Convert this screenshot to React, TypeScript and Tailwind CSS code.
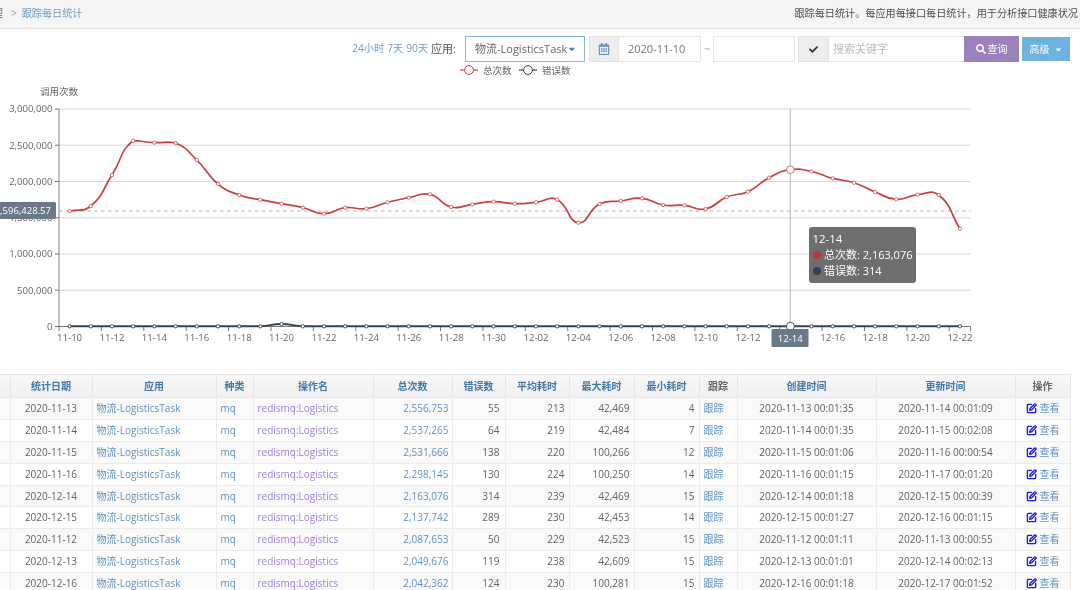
import React from "react";
import { SquarePen } from "lucide-react";
import { FaRegCalendarAlt, FaCaretDown, FaCheck, FaSearch } from "react-icons/fa";

const totalY = [211,206,175,140.7,142.6,143,160,184,195,199.7,203.7,207.7,213.7,207.7,208.7,202.3,197.7,194.3,207,204.3,201.7,203.7,202.3,199.7,222.7,204,201,198.3,205,205.3,209,197,191.7,177.7,169.7,171.5,178.4,182.7,192,199.3,194.7,195,228.7];
const errorY = totalY.map((_, i) => (i === 10 ? 324 : 326.3));
const band = (970.5 - 59) / 43;
const xAt = (i: number) => 59 + band * (i + 0.5);

function smooth(ys: number[]) {
  const lo = Math.min(...ys);
  const hi = Math.max(...ys);
  const pts = ys.map((y, i) => [xAt(i), y]);
  const ctrl = pts.map((p, i) => {
    const a = pts[Math.max(i - 1, 0)];
    const b = pts[Math.min(i + 1, pts.length - 1)];
    const d0 = Math.hypot(p[0] - a[0], p[1] - a[1]);
    const d1 = Math.hypot(p[0] - b[0], p[1] - b[1]);
    const sum = d0 + d1 || 1;
    const vx = (b[0] - a[0]) * 0.5;
    const vy = (b[1] - a[1]) * 0.5;
    const cl = (v: number) => Math.min(hi, Math.max(lo, v));
    return {
      inX: p[0] - (vx * d0) / sum,
      inY: cl(p[1] - (vy * d0) / sum),
      outX: p[0] + (vx * d1) / sum,
      outY: cl(p[1] + (vy * d1) / sum),
    };
  });
  let d = `M${pts[0][0]} ${pts[0][1]}`;
  for (let i = 0; i < pts.length - 1; i++) {
    d += ` C${ctrl[i].outX} ${ctrl[i].outY} ${ctrl[i + 1].inX} ${ctrl[i + 1].inY} ${pts[i + 1][0]} ${pts[i + 1][1]}`;
  }
  return d;
}

const dates: string[] = [];
for (let i = 0; i < 43; i++) {
  dates.push(i < 21 ? `11-${String(10 + i)}` : `12-${String(i - 20).padStart(2, "0")}`);
}

const yTicks = [
  ["3,000,000", 109],
  ["2,500,000", 145.2],
  ["2,000,000", 181.5],
  ["1,500,000", 217.8],
  ["1,000,000", 254],
  ["500,000", 290.2],
  ["0", 326.5],
] as const;

const rows = [
  ["2020-11-13", "2,556,753", "55", "213", "42,469", "4", "2020-11-13 00:01:35", "2020-11-14 00:01:09"],
  ["2020-11-14", "2,537,265", "64", "219", "42,484", "7", "2020-11-14 00:01:35", "2020-11-15 00:02:08"],
  ["2020-11-15", "2,531,666", "138", "220", "100,266", "12", "2020-11-15 00:01:06", "2020-11-16 00:00:54"],
  ["2020-11-16", "2,298,145", "130", "224", "100,250", "14", "2020-11-16 00:01:15", "2020-11-17 00:01:20"],
  ["2020-12-14", "2,163,076", "314", "239", "42,469", "15", "2020-12-14 00:01:18", "2020-12-15 00:00:39"],
  ["2020-12-15", "2,137,742", "289", "230", "42,453", "14", "2020-12-15 00:01:27", "2020-12-16 00:01:15"],
  ["2020-11-12", "2,087,653", "50", "229", "42,523", "15", "2020-11-12 00:01:11", "2020-11-13 00:00:55"],
  ["2020-12-13", "2,049,676", "119", "238", "42,609", "15", "2020-12-13 00:01:01", "2020-12-14 00:02:13"],
  ["2020-12-16", "2,042,362", "124", "230", "100,281", "15", "2020-12-16 00:01:18", "2020-12-17 00:01:52"],
];

const heads: [string, boolean][] = [
  ["", false],
  ["统计日期", true],
  ["应用", true],
  ["种类", true],
  ["操作名", true],
  ["总次数", true],
  ["错误数", true],
  ["平均耗时", true],
  ["最大耗时", true],
  ["最小耗时", true],
  ["跟踪", false],
  ["创建时间", true],
  ["更新时间", true],
  ["操作", false],
];

function Chart() {
  return (
    <svg className="block" width="1080" height="312" viewBox="0 62 1080 312" fontFamily="'Open Sans','Noto Sans CJK SC',sans-serif">
      {/* legend */}
      <line x1="460" x2="478" y1="70" y2="70" stroke="#c9403d" strokeWidth="1.2" />
      <circle cx="469" cy="70" r="4.4" fill="#fff" stroke="#c9403d" />
      <text x="483" y="73.5" fontSize="9.5" fill="#666">总次数</text>
      <line x1="519" x2="537" y1="70" y2="70" stroke="#2f4554" strokeWidth="1.2" />
      <circle cx="528" cy="70" r="4.4" fill="#fff" stroke="#2f4554" />
      <text x="542" y="73.5" fontSize="9.5" fill="#666">错误数</text>
      <text x="40" y="95" fontSize="9.5" fill="#666">调用次数</text>

      {/* grid + y axis */}
      {yTicks.map(([label, y]) => (
        <g key={label}>
          {y < 326 && <line x1="59" x2="970.5" y1={y} y2={y} stroke="#d6d6d6" strokeWidth="1" />}
          <line x1="55" x2="59" y1={y} y2={y} stroke="#777" strokeWidth="1" />
          <text x="52.5" y={y + 3.4} fontSize="9.6" fill="#666" textAnchor="end">{label}</text>
        </g>
      ))}
      <line x1="59" x2="59" y1="109" y2="327" stroke="#888" strokeWidth="1" />

      {/* x axis */}
      <line x1="59" x2="970.5" y1="326.5" y2="326.5" stroke="#777" strokeWidth="1" />
      {dates.map((d, i) =>
        i % 2 === 0 ? (
          <g key={d}>
            <line x1={59 + band * i} x2={59 + band * i} y1="326.5" y2="331" stroke="#777" strokeWidth="1" />
            {d !== "12-14" && (
              <text x={xAt(i)} y="340.5" fontSize="9.6" fill="#666" textAnchor="middle">{d}</text>
            )}
          </g>
        ) : null,
      )}
      <line x1="970.5" x2="970.5" y1="326.5" y2="331" stroke="#777" strokeWidth="1" />

      {/* axis pointer */}
      <line x1={xAt(34)} x2={xAt(34)} y1="109" y2="326.5" stroke="#c0c0c0" strokeWidth="1.2" />

      {/* average mark line */}
      <line x1="59" x2="970.5" y1="211" y2="211" stroke="#b4b4b4" strokeWidth="1" strokeDasharray="3.5 3.5" />

      {/* series */}
      <path d={smooth(errorY)} fill="none" stroke="#2f4554" strokeWidth="1.9" />
      {errorY.map((y, i) => (
        <circle key={i} cx={xAt(i)} cy={y} r={i === 34 ? 4 : 1.7} fill="#fff" stroke="#2f4554" strokeWidth="0.9" />
      ))}
      <path d={smooth(totalY)} fill="none" stroke="#c9403d" strokeWidth="1.7" />
      {totalY.map((y, i) => (
        <circle key={i} cx={xAt(i)} cy={y} r={i === 34 ? 3.8 : 1.7} fill="#fff" stroke="#d0605c" strokeWidth="0.9" />
      ))}

      {/* mark label */}
      <rect x="-4" y="202" width="60" height="17" rx="1.5" fill="#6a7985" />
      <text x="51" y="214" fontSize="9.5" fill="#fff" textAnchor="end">1,596,428.57</text>

      {/* x pointer label */}
      <rect x="771.5" y="329" width="37" height="18" rx="1" fill="#6a7985" />
      <text x={xAt(34)} y="341.5" fontSize="9.6" fill="#fff" textAnchor="middle">12-14</text>
    </svg>
  );
}

export default function App() {
  return (
    <div className="w-[1080px] h-[590px] overflow-hidden bg-white font-['Open_Sans','Noto_Sans_CJK_SC',sans-serif] text-[10px] text-[#666] blur-[0.45px]">
      {/* breadcrumb bar */}
      <div className="h-[29px] flex items-center justify-between bg-[#f5f5f5] border-b border-[#e3e3e3] pr-[2px] whitespace-nowrap">
        <div className="flex items-center ml-[-7px]">
          <span>理</span>
          <span className="ml-[8px] text-[#999]">&gt;</span>
          <span className="ml-[5px] text-[#6b9dc7] text-[10.15px]">跟踪每日统计</span>
        </div>
        <div className="text-[#4f4f4f] text-[10.15px]">跟踪每日统计。每应用每接口每日统计，用于分析接口健康状况</div>
      </div>

      {/* toolbar */}
      <div className="flex justify-end items-start pt-[7px] pr-[10px] h-[33px] whitespace-nowrap">
        <div className="h-[26px] flex items-center text-[#6a9fd0] gap-[3px] mr-[3px] text-[10.2px]">
          <span>24小时</span>
          <span>7天</span>
          <span>90天</span>
        </div>
        <div className="h-[26px] flex items-center mr-[9px] text-[#555] text-[11px]">应用:</div>
        <div className="h-[26px] w-[120px] flex items-center justify-between pl-[9px] pr-[7px] border border-[#8db6dc] text-[11px] text-[#666]">
          <span>物流-LogisticsTask</span>
          <FaCaretDown className="text-[#5585b5] text-[10px]" />
        </div>
        <div className="h-[26px] w-[30px] ml-[4px] flex items-center justify-center bg-[#eeeeee] border border-[#e2e2e2]">
          <FaRegCalendarAlt className="text-[#5a8fc4] text-[12px]" />
        </div>
        <div className="h-[26px] w-[82px] flex items-center pl-[9px] border border-l-0 border-[#e6e6e6] text-[11px] text-[#777]">2020-11-10</div>
        <div className="h-[26px] w-[12px] flex items-center justify-center text-[#8aa9c4]">~</div>
        <div className="h-[26px] w-[82px] border border-[#e6e6e6]" />
        <div className="h-[26px] w-[31px] ml-[3px] flex items-center justify-center bg-[#eeeeee] border border-[#e2e2e2]">
          <FaCheck className="text-[#333] text-[9px]" />
        </div>
        <div className="h-[26px] w-[135px] flex items-center pl-[4px] border-y border-[#e6e6e6] text-[11px] text-[#bbbbbb]">搜索关键字</div>
        <div className="h-[26px] w-[55px] flex items-center justify-center gap-[2px] bg-[#9b82bd] text-white">
          <FaSearch className="text-[10px]" />
          <span>查询</span>
        </div>
        <div className="h-[24px] w-[48px] mt-[1px] ml-[3px] flex items-center justify-center gap-[4px] bg-[#6cb3e0] text-white">
          <span>高级</span>
          <FaCaretDown className="text-[9px]" />
        </div>
      </div>

      {/* chart */}
      <div className="relative h-[312px]">
        <Chart />
        <div className="absolute left-[809px] top-[165px] w-[107px] h-[56px] rounded-[3px] bg-[#6e6e6e] text-white text-[11px] leading-[16px] px-[3.5px] py-[4px] whitespace-nowrap">
          <div className="text-[11.4px]">12-14</div>
          <div className="flex items-center">
            <span className="w-[8px] h-[8px] shrink-0 rounded-full bg-[#c23531] mr-[3.5px]" />
            <span>总次数: 2,163,076</span>
          </div>
          <div className="flex items-center">
            <span className="w-[8px] h-[8px] shrink-0 rounded-full bg-[#2f4554] mr-[3.5px]" />
            <span>错误数: 314</span>
          </div>
        </div>
      </div>

      {/* table */}
      <table className="table-fixed border-collapse w-[1070px] text-[10px] text-[#636363]">
        <colgroup>
          <col className="w-[10px]" />
          <col className="w-[82px]" />
          <col className="w-[124px]" />
          <col className="w-[37px]" />
          <col className="w-[120px]" />
          <col className="w-[79px]" />
          <col className="w-[53px]" />
          <col className="w-[64px]" />
          <col className="w-[65px]" />
          <col className="w-[65px]" />
          <col className="w-[38px]" />
          <col className="w-[139px]" />
          <col className="w-[139px]" />
          <col className="w-[55px]" />
        </colgroup>
        <thead>
          <tr className="h-[23px] bg-gradient-to-b from-[#f8f8f8] to-[#efefef]">
            {heads.map(([h, link], i) => (
              <th
                key={i}
                className={`border border-[#e6e6e6] border-l-0 p-0 text-center font-semibold whitespace-nowrap ${link ? "text-[#4079ad]" : "text-[#666]"}`}
              >
                {h}
              </th>
            ))}
          </tr>
        </thead>
        <tbody>
          {rows.map((r, i) => (
            <tr key={i} className={`h-[21.9px] ${i % 2 === 0 ? "bg-[#f9f9f9]" : "bg-white"}`}>
              <td className="border border-[#ececec] border-l-0 p-0" />
              <td className="border border-[#ececec] p-0 text-center whitespace-nowrap">{r[0]}</td>
              <td className="border border-[#ececec] p-0 pl-[4px] text-[#5f93c4] whitespace-nowrap">物流-LogisticsTask</td>
              <td className="border border-[#ececec] p-0 pl-[4px] text-[#5f93c4]">mq</td>
              <td className="border border-[#ececec] p-0 pl-[4px] text-[#a080de] whitespace-nowrap">redismq:Logistics</td>
              <td className="border border-[#ececec] p-0 pr-[3px] text-right text-[#5f93c4]">{r[1]}</td>
              <td className="border border-[#ececec] p-0 pr-[5px] text-right">{r[2]}</td>
              <td className="border border-[#ececec] p-0 pr-[4px] text-right">{r[3]}</td>
              <td className="border border-[#ececec] p-0 pr-[4px] text-right">{r[4]}</td>
              <td className="border border-[#ececec] p-0 pr-[4px] text-right">{r[5]}</td>
              <td className="border border-[#ececec] p-0 pl-[4px] text-[#5f93c4]">跟踪</td>
              <td className="border border-[#ececec] p-0 text-center whitespace-nowrap">{r[6]}</td>
              <td className="border border-[#ececec] p-0 text-center whitespace-nowrap">{r[7]}</td>
              <td className="border border-[#ececec] p-0">
                <div className="flex items-center justify-center gap-[3px] text-[#5f93c4]">
                  <SquarePen className="w-[11px] h-[11px] text-[#1a1af0]" strokeWidth={3} />
                  <span>查看</span>
                </div>
              </td>
            </tr>
          ))}
        </tbody>
      </table>
    </div>
  );
}
